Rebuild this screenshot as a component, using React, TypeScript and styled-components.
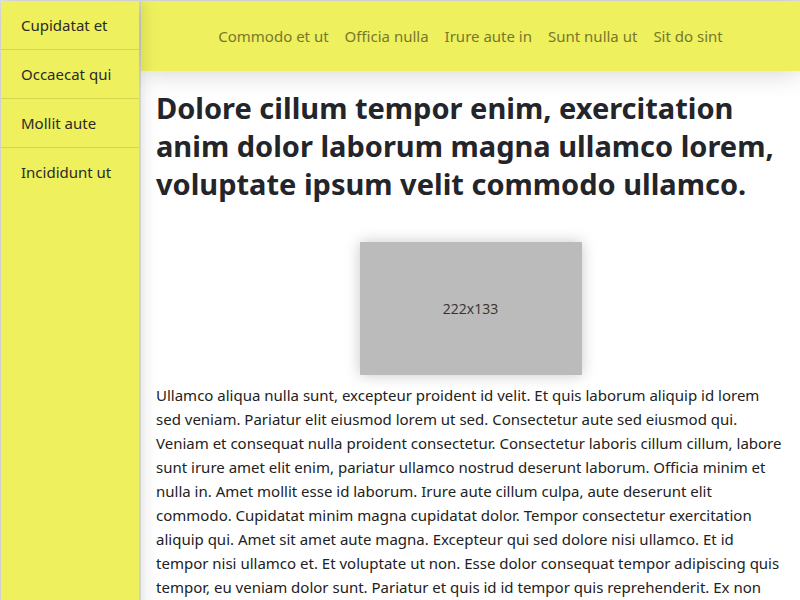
import React from "react";
import styled, { createGlobalStyle } from "styled-components";

const Global = createGlobalStyle`
  html, body { margin: 0; padding: 0; height: 100%; overflow: hidden; }
  body { background: #e3e4e9; font-family: "Noto Sans", "Open Sans", sans-serif; }
  #root { height: 100%; }
`;

const Shell = styled.div`
  display: grid;
  grid-template-columns: 138px 1fr;
  column-gap: 2px;
  height: 100vh;
  padding: 1px 0 0 1px;
  box-sizing: border-box;
  overflow: hidden;
`;

const Sidebar = styled.nav`
  background: #eef05e;
  box-shadow: 0 0 18px rgba(0, 0, 0, 0.18);
  position: relative;
  z-index: 2;
  display: flex;
  flex-direction: column;
`;

const SideItem = styled.div`
  height: 48px;
  border-bottom: 1px solid #d3d552;
  display: flex;
  align-items: center;
  padding-left: 20px;
  font-size: 15px;
  color: #2b2b24;
  &:last-child {
    border-bottom: none;
  }
`;

const Main = styled.div`
  display: flex;
  flex-direction: column;
  min-width: 0;
  background: #fff;
`;

const Header = styled.header`
  height: 70px;
  flex: none;
  background: #eef05e;
  box-shadow: 0 0 28px rgba(0, 0, 0, 0.2);
  position: relative;
  z-index: 1;
  display: flex;
  align-items: center;
  justify-content: center;
  gap: 16px;
`;

const NavLink = styled.a`
  font-size: 15px;
  color: #77782c;
  text-decoration: none;
`;

const Content = styled.main`
  padding: 18px 15px 0 15px;
  color: #222;
`;

const Title = styled.h1`
  margin: 0;
  font-size: 29px;
  line-height: 38px;
  font-weight: 700;
  color: #23252b;
`;

const Figure = styled.div`
  display: flex;
  justify-content: center;
  margin: 39px 0 8px;
`;

const Placeholder = styled.div`
  width: 222px;
  height: 133px;
  background: #bbbbbb;
  box-shadow: 0 0 14px rgba(0, 0, 0, 0.22);
  display: flex;
  align-items: center;
  justify-content: center;
  font-family: "Open Sans", sans-serif;
  font-size: 14px;
  color: #333;
`;

const Paragraph = styled.p`
  margin: 0;
  font-size: 15px;
  line-height: 24px;
  color: #222;
`;

const side = ["Cupidatat et", "Occaecat qui", "Mollit aute", "Incididunt ut"];
const nav = ["Commodo et ut", "Officia nulla", "Irure aute in", "Sunt nulla ut", "Sit do sint"];

export default function App() {
  return (
    <>
      <Global />
      <Shell>
        <Sidebar>
          {side.map((s) => (
            <SideItem key={s}>{s}</SideItem>
          ))}
        </Sidebar>
        <Main>
          <Header>
            {nav.map((n) => (
              <NavLink key={n}>{n}</NavLink>
            ))}
          </Header>
          <Content>
            <Title>
              Dolore cillum tempor enim, exercitation anim dolor laborum magna ullamco lorem, voluptate ipsum velit commodo ullamco.
            </Title>
            <Figure>
              <Placeholder>222x133</Placeholder>
            </Figure>
            <Paragraph>
              Ullamco aliqua nulla sunt, excepteur proident id velit. Et quis laborum aliquip id lorem sed veniam. Pariatur elit eiusmod lorem ut sed. Consectetur aute sed eiusmod qui. Veniam et consequat nulla proident consectetur. Consectetur laboris cillum cillum, labore sunt irure amet elit enim, pariatur ullamco nostrud deserunt laborum. Officia minim et nulla in. Amet mollit esse id laborum. Irure aute cillum culpa, aute deserunt elit commodo. Cupidatat minim magna cupidatat dolor. Tempor consectetur exercitation aliquip qui. Amet sit amet aute magna. Excepteur qui sed dolore nisi ullamco. Et id tempor nisi ullamco et. Et voluptate ut non. Esse dolor consequat tempor adipiscing quis tempor, eu veniam dolor sunt. Pariatur et quis id id tempor quis reprehenderit. Ex non consequat sunt, dolor ullamco eiusmod aute sed. Mollit sed tempor dolore ut.
            </Paragraph>
          </Content>
        </Main>
      </Shell>
    </>
  );
}
